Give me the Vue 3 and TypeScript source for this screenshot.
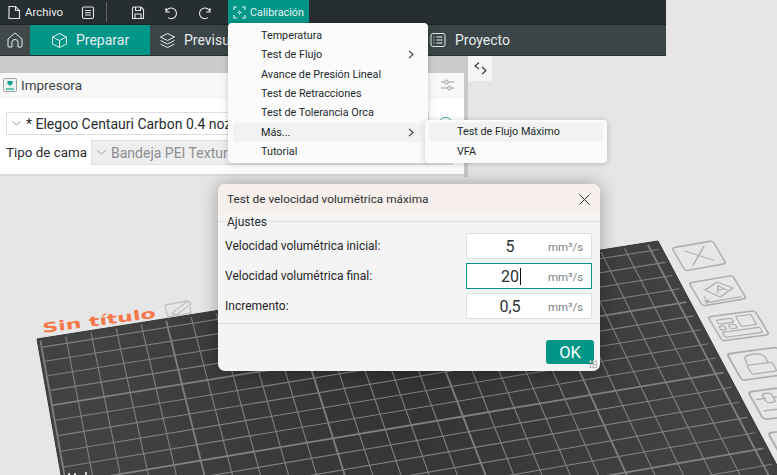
<script setup lang="ts">
// Slicer window with the calibration menu open and the speed test dialog on top.
// The build plate is projected from four corners so the grid lines converge.
type Pt = [number, number];

const menuItems = [
  { label: "Temperatura" },
  { label: "Test de Flujo", arrow: true },
  { label: "Avance de Presión Lineal" },
  { label: "Test de Retracciones" },
  { label: "Test de Tolerancia Orca" },
  { label: "Más...", arrow: true, active: true },
  { label: "Tutorial" },
];

const fields = [
  { label: "Velocidad volumétrica inicial:", value: "5", focus: false },
  { label: "Velocidad volumétrica final:", value: "20", focus: true },
  { label: "Incremento:", value: "0,5", focus: false },
];

function projector(p00: Pt, p10: Pt, p11: Pt, p01: Pt) {
  const dx1 = p10[0] - p11[0];
  const dx2 = p01[0] - p11[0];
  const sx = p00[0] - p10[0] + p11[0] - p01[0];
  const dy1 = p10[1] - p11[1];
  const dy2 = p01[1] - p11[1];
  const sy = p00[1] - p10[1] + p11[1] - p01[1];
  const det = dx1 * dy2 - dx2 * dy1;
  const g = (sx * dy2 - dx2 * sy) / det;
  const h = (dx1 * sy - sx * dy1) / det;
  const a = p10[0] - p00[0] + g * p10[0];
  const b = p01[0] - p00[0] + h * p01[0];
  const d = p10[1] - p00[1] + g * p10[1];
  const e = p01[1] - p00[1] + h * p01[1];
  return (u: number, v: number): Pt => {
    const w = g * u + h * v + 1;
    return [(a * u + b * v + p00[0]) / w, (d * u + e * v + p00[1]) / w];
  };
}

const plate: [Pt, Pt, Pt, Pt] = [[37, 339], [658, 241], [868, 637], [115, 780]];
const project = projector(...plate);
const platePoints = plate.map((p) => p.join(",")).join(" ");

const SIZE = 25.6;
const gridLines: { x1: number; y1: number; x2: number; y2: number; major: boolean }[] = [];
for (let k = 0; k <= 25; k++) {
  const u = (k + 0.12) / SIZE;
  const a = project(u, 0.006);
  const b = project(u, 1);
  gridLines.push({ x1: a[0], y1: a[1], x2: b[0], y2: b[1], major: k % 5 === 0 });
  const v = (k + 0.62) / SIZE;
  const c = project(0.006, v);
  const d = project(0.994, v);
  gridLines.push({ x1: c[0], y1: c[1], x2: d[0], y2: d[1], major: k % 5 === 4 });
}
</script>

<template>
  <div class="app">
    <svg class="scene" width="777" height="475" viewBox="0 0 777 475">
      <defs>
        <radialGradient id="plateShade" gradientUnits="userSpaceOnUse" cx="400" cy="370" r="300">
          <stop offset="0" stop-color="#303331" />
          <stop offset="1" stop-color="#414342" />
        </radialGradient>
      </defs>
      <polygon :points="platePoints" fill="url(#plateShade)" stroke="#363837" stroke-width="1" />
      <line
        v-for="(l, i) in gridLines"
        :key="i"
        :x1="l.x1"
        :y1="l.y1"
        :x2="l.x2"
        :y2="l.y2"
        stroke="#7f817f"
        :stroke-width="l.major ? 1.8 : 1.1"
      />
      <text class="plate-name" transform="matrix(1.62,-0.22,0.12,1,43,333)">Sin título</text>
      <g fill="none" stroke="#c2c2c2" stroke-width="1.4" stroke-linejoin="round">
        <path d="M165 305 L187 301 M165 305 L168 317 L191 313 L190 307" />
        <path d="M172 313 L188 301 L191 304 L176 315 Z" />
      </g>

      <g fill="none" stroke="#aeaeae" stroke-width="1.5" stroke-linejoin="round" stroke-linecap="round">
        <g transform="matrix(1.02,-0.18,0.55,0.95,672,248)">
          <rect width="40" height="24" rx="2.5" />
          <path d="M10 5 L31 19 M29 4 L10 20" stroke-width="1.1" />
        </g>
        <g transform="matrix(1.09,-0.19,0.57,0.96,689,283)">
          <rect width="40" height="24" rx="2.5" />
          <path d="M4 21.5 H36 M6 15 V21 M4 19 L6 21 L8 19" stroke-width="1.1" />
          <path d="M10 9.2 L24 3.7 L34 12 L19 18.3 Z" stroke-width="1.1" />
          <path d="M19 14 L23 7 L28 13 M21 11.5 H26" stroke-width="1" />
        </g>
        <g transform="matrix(1.17,-0.16,0.6,1,708,317)">
          <rect width="40" height="24" rx="2.5" />
          <rect x="5" y="4" width="13" height="4" rx="1.5" stroke-width="1.1" />
          <rect x="22" y="3" width="13" height="10" rx="1" stroke-width="1.1" />
          <rect x="4" y="10" width="5" height="4" rx="2" stroke-width="1.1" />
          <rect x="12" y="10" width="6" height="4" rx="2" stroke-width="1.1" />
          <rect x="4" y="16" width="32" height="5" rx="1" stroke-width="1.1" />
        </g>
        <g transform="matrix(1.25,-0.17,0.62,1.1,727,354)">
          <rect width="40" height="24" rx="2.5" />
          <path d="M11 11 V8 Q11 3 19 3 Q27 3 27 8 V11" stroke-width="1.1" />
          <rect x="10" y="12" width="20" height="8" rx="1.5" stroke-width="1.1" />
        </g>
        <g transform="matrix(1.3,-0.17,0.65,1.15,748,392)">
          <rect width="40" height="24" rx="2.5" />
          <path d="M3 7 H10 M16 7 H30 M4 17 H32" stroke-width="1.1" />
          <rect x="9" y="3" width="7" height="8" rx="2.5" stroke-width="1.1" />
        </g>
        <g transform="matrix(1.35,-0.17,0.68,1.2,768,433)">
          <rect width="40" height="24" rx="2.5" />
        </g>
      </g>
      <g fill="#cfcfcf">
        <rect x="68" y="473" width="2" height="2" />
        <rect x="74" y="473" width="2" height="2" />
        <rect x="85" y="472" width="2" height="3" />
      </g>
    </svg>

    <header class="header">
      <div class="topbar">
        <svg class="ic ic-file" width="14" height="15" viewBox="0 0 14 15">
          <path d="M2 1.5 H8.5 L12.5 5.5 V13.5 H2 Z M8.5 1.5 V5.5 H12.5" />
        </svg>
        <span class="top-label">Archivo</span>
        <svg class="ic ic-list" width="14" height="15" viewBox="0 0 14 15">
          <rect x="1.5" y="2" width="11" height="11.5" rx="1.5" />
          <path d="M4 5.5 H10 M4 7.7 H10 M4 10 H10" />
        </svg>
        <span class="divider"></span>
        <svg class="ic ic-save" width="14" height="15" viewBox="0 0 14 15">
          <path d="M2.5 2 H10 L12.5 4.5 V13.5 H1.5 V3 Q1.5 2 2.5 2 Z" />
          <path d="M4.5 2 V5.5 H9.5 V2 M4 13.5 V9 H10 V13.5" />
        </svg>
        <svg class="ic ic-undo" width="14" height="15" viewBox="0 0 14 15">
          <path d="M3 3 V7 H7 M3 7 A5.3 5.3 0 1 1 5 12.6" />
        </svg>
        <svg class="ic ic-redo" width="14" height="15" viewBox="0 0 14 15">
          <path d="M11 3 V7 H7 M11 7 A5.3 5.3 0 1 0 9 12.6" />
        </svg>
        <div class="calib">
          <svg class="ic-calib" width="13" height="13" viewBox="0 0 13 13">
            <path d="M1 4 V1 H4 M9 1 H12 V4 M12 9 V12 H9 M4 12 H1 V9 M6.5 4.5 V6 M6.5 7 V8.5 M4.5 6.5 H6 M7 6.5 H8.5" />
          </svg>
          <span>Calibración</span>
        </div>
      </div>
      <nav class="tabbar">
        <div class="tab-home">
          <svg width="18" height="18" viewBox="0 0 18 18">
            <path d="M2 8 L9 2 L16 8 V15 Q16 16 15 16 H12 V11 Q12 8.5 9 8.5 Q6 8.5 6 11 V16 H3 Q2 16 2 15 Z" />
          </svg>
        </div>
        <div class="tab tab-active">
          <svg width="17" height="17" viewBox="0 0 17 17">
            <path d="M8.5 1.5 L15.5 5 V12 L8.5 15.5 L1.5 12 V5 Z M1.5 5 L8.5 8.5 L15.5 5 M8.5 8.5 V15.5" />
          </svg>
          <span>Preparar</span>
        </div>
        <div class="tab tab-preview">
          <svg width="17" height="17" viewBox="0 0 17 17">
            <path d="M8.5 1.5 L15.5 5 L8.5 8.5 L1.5 5 Z M1.5 8.5 L8.5 12 L15.5 8.5 M1.5 12 L8.5 15.5 L15.5 12" />
          </svg>
          <span>Previsu</span>
        </div>
        <div class="tab tab-project">
          <svg width="16" height="16" viewBox="0 0 16 16">
            <rect x="1" y="1.5" width="14" height="13" rx="2" />
            <path d="M3.5 5 H4.5 M6.5 5 H12.5 M3.5 8 H4.5 M6.5 8 H12.5 M3.5 11 H4.5 M6.5 11 H12.5" />
          </svg>
          <span>Proyecto</span>
        </div>
      </nav>
    </header>

    <div class="below">
      <aside class="sidebar">
        <div class="side-strip"></div>
        <div class="side-head">
          <svg width="14" height="14" viewBox="0 0 14 14">
            <rect x=".5" y=".5" width="13" height="13" rx="1" fill="#eef3f2" stroke="#9aa3a3" />
            <path d="M4.5 3 H9.5 V5.5 L7 8 L4.5 5.5 Z" fill="#00a08c" />
            <path d="M3 11 H11" stroke="#00a08c" stroke-width="1.2" />
          </svg>
          <span class="side-title">Impresora</span>
          <svg class="tune" width="14" height="14" viewBox="0 0 14 14">
            <path d="M0 4 H4 M7 4 H13 M0 10 H7 M10 10 H13" />
            <rect x="4" y="2" width="3" height="4" rx="1.5" />
            <rect x="7" y="8" width="3" height="4" rx="1.5" />
          </svg>
        </div>
        <div class="side-panel">
          <div class="row-one">
            <div class="combo combo-printer">
              <svg class="chev" width="9" height="5" viewBox="0 0 9 5"><path d="M.5 .5 L4.5 4 L8.5 .5" /></svg>
              <span>* Elegoo Centauri Carbon 0.4 nozzle</span>
            </div>
            <span class="ring"></span>
          </div>
          <div class="row-two">
            <span class="bed-label">Tipo de cama</span>
            <div class="combo combo-bed">
              <svg class="chev" width="9" height="5" viewBox="0 0 9 5"><path d="M.5 .5 L4.5 4 L8.5 .5" /></svg>
              <span>Bandeja PEI Texturizada</span>
            </div>
          </div>
        </div>
      </aside>
      <div class="side-edge"></div>
      <div class="collapse">
        <svg width="15" height="15" viewBox="0 0 15 15">
          <path d="M6 1.5 L2 5 L6 8 M9 6 L13 9.5 L9 13" />
        </svg>
      </div>
    </div>

    <div class="menu">
      <div v-for="item in menuItems" :key="item.label" class="menu-row" :class="{ active: item.active }">
        <span>{{ item.label }}</span>
        <svg v-if="item.arrow" class="menu-arrow" width="6" height="9" viewBox="0 0 6 9"><path d="M1 .8 L5 4.5 L1 8.2" /></svg>
      </div>
    </div>
    <div class="submenu">
      <div class="sub-row active">Test de Flujo Máximo</div>
      <div class="sub-row">VFA</div>
    </div>

    <section class="dialog">
      <div class="dialog-title">
        <span>Test de velocidad volumétrica máxima</span>
        <svg width="11" height="11" viewBox="0 0 11 11"><path d="M.5 .5 L10.5 10.5 M10.5 .5 L.5 10.5" /></svg>
      </div>
      <div class="group">
        <span class="group-label">Ajustes</span>
        <div v-for="f in fields" :key="f.label" class="field">
          <label>{{ f.label }}</label>
          <div class="input" :class="{ focused: f.focus }">
            <span class="value">{{ f.value }}<i v-if="f.focus" class="caret"></i></span>
            <span class="unit">mm³/s</span>
          </div>
        </div>
      </div>
      <div class="dialog-foot">
        <button class="ok" type="button">OK</button>
      </div>
      <span class="grip"></span>
    </section>
  </div>
</template>

<style scoped>
.app {
  position: relative;
  width: 777px;
  height: 475px;
  overflow: hidden;
  background: #e6e6e6;
  font-family: Roboto, "Noto Sans", sans-serif;
  color: #262e30;
}
.scene { position: absolute; left: 0; top: 0; }
.plate-name {
  font-family: "DejaVu Sans", sans-serif;
  font-weight: 700;
  font-size: 13.5px;
  fill: #f5774a;
}

.header { position: relative; width: 666px; }
.topbar {
  display: flex;
  align-items: center;
  height: 24px;
  padding-left: 7px;
  background: #272e2f;
  border-bottom: 1px solid #1e2425;
}
.ic { fill: none; stroke: #e4e7e7; stroke-width: 1.1; flex: none; }
.top-label { margin-left: 4px; font-size: 11.4px; color: #e8ecec; width: 39px; }
.ic-list { margin-left: 17px; }
.divider { width: 1px; height: 20px; margin-left: 11px; background: #5c6263; }
.ic-save { margin-left: 24px; }
.ic-undo { margin-left: 18px; }
.ic-redo { margin-left: 22px; }
.calib {
  display: flex;
  align-items: center;
  gap: 4px;
  height: 24px;
  width: 81px;
  margin-left: 15px;
  padding-left: 5px;
  box-sizing: border-box;
  background: #009688;
  font-size: 10.8px;
  color: #e6f5f3;
}
.ic-calib { fill: none; stroke: #e6f5f3; stroke-width: 1.1; }

.tabbar {
  display: flex;
  height: 30px;
  background: #3b4446;
  border-bottom: 1px solid #2a3031;
  font-size: 14px;
  color: #e4ecec;
}
.tabbar svg { fill: none; stroke: #e4ecec; stroke-width: 1; flex: none; }
.tab-home {
  display: flex;
  align-items: center;
  justify-content: center;
  width: 30px;
  background: #42494b;
}
.tab { display: flex; align-items: center; }
.tab-active { width: 120px; padding-left: 21px; gap: 8px; box-sizing: border-box; background: #009688; }
.tab-preview { width: 280px; padding-left: 9px; gap: 8px; box-sizing: border-box; }
.tab-project { gap: 9px; }

.below { display: flex; align-items: flex-start; width: 492px; }
.sidebar { width: 464px; }
.side-strip { height: 17px; background: #cbcbcb; }
.side-head {
  display: flex;
  align-items: center;
  height: 26px;
  padding: 0 0 2px 3px;
  box-sizing: border-box;
  background: #f8f8f8;
}
.side-title { margin-left: 4px; font-size: 13.5px; color: #3a4244; }
.tune { margin-left: auto; margin-right: 9px; fill: none; stroke: #8c9090; stroke-width: .9; }
.side-panel {
  display: flex;
  flex-direction: column;
  gap: 5px;
  height: 77px;
  padding: 13px 11px 0 6px;
  box-sizing: border-box;
  background: #fff;
  border-bottom: 2px solid #dcdcdc;
}
.row-one, .row-two { display: flex; align-items: center; }
.combo {
  display: flex;
  align-items: center;
  gap: 5px;
  box-sizing: border-box;
  border: 1px solid #dedede;
  padding-left: 5px;
  font-size: 14px;
  white-space: nowrap;
  overflow: hidden;
}
.chev { flex: none; fill: none; stroke: #9a9e9e; }
.combo-printer { width: 423px; height: 23px; }
.ring {
  width: 15px;
  height: 15px;
  margin-left: 9px;
  margin-top: 2px;
  border: 1.5px solid #2fa899;
  border-radius: 50%;
  box-sizing: border-box;
}
.bed-label { width: 85px; font-size: 13.4px; white-space: nowrap; }
.combo-bed { width: 362px; height: 25px; background: #eeeeee; color: #8b8f90; }
.side-edge { width: 4px; height: 121px; background: #c9c9c9; }
.collapse {
  display: flex;
  justify-content: center;
  align-items: center;
  width: 24px;
  height: 25px;
  background: #f5f5f5;
}
.collapse svg { fill: none; stroke: #33393a; stroke-width: 1.1; }

.menu {
  position: absolute;
  left: 228px;
  top: 23px;
  width: 200px;
  height: 140px;
  padding: 2.5px 5px;
  box-sizing: border-box;
  background: #fbfbfb;
  border-radius: 4px;
  box-shadow: 0 1px 6px rgba(0, 0, 0, 0.22);
}
.menu-row {
  display: flex;
  align-items: center;
  justify-content: space-between;
  height: 19.45px;
  padding: 0 9px 0 28px;
  border-radius: 3px;
  font-size: 10.8px;
  color: #22292b;
}
.menu-row.active, .sub-row.active { background: #f2f2f2; }
.menu-arrow { fill: none; stroke: #3a4142; stroke-width: 1.1; }
.submenu {
  position: absolute;
  left: 425px;
  top: 120px;
  width: 182px;
  height: 43px;
  padding: 2px 4px;
  box-sizing: border-box;
  background: #fbfbfb;
  border-radius: 4px;
  box-shadow: 0 1px 6px rgba(0, 0, 0, 0.22);
}
.sub-row {
  display: flex;
  align-items: center;
  height: 19.5px;
  padding-left: 28px;
  border-radius: 3px;
  font-size: 10.8px;
  color: #22292b;
}

.dialog {
  position: absolute;
  left: 218px;
  top: 184px;
  width: 382px;
  height: 187px;
  display: flex;
  flex-direction: column;
  background: #f4f4f4;
  border-radius: 7px;
  overflow: hidden;
  box-shadow: 0 0 18px rgba(0, 0, 0, 0.32);
}
.dialog-title {
  display: flex;
  align-items: center;
  justify-content: space-between;
  flex: none;
  height: 30px;
  padding: 0 10px 0 9px;
  background: #f7efec;
  font-size: 11.8px;
  color: #2b3133;
}
.dialog-title svg { fill: none; stroke: #2b3133; stroke-width: 1; }
.group {
  position: relative;
  display: flex;
  flex-direction: column;
  gap: 4px;
  margin-top: 7px;
  height: 103px;
  padding-top: 11px;
  box-sizing: border-box;
  border-top: 1px solid #dddddd;
  border-bottom: 1px solid #dddddd;
}
.group-label {
  position: absolute;
  left: 9px;
  top: -7px;
  padding-right: 2px;
  background: #f4f4f4;
  font-size: 12px;
  line-height: 14px;
}
.field {
  display: flex;
  align-items: center;
  justify-content: space-between;
  height: 26px;
  padding: 0 8px 0 7px;
}
.field label { font-size: 12px; color: #1f2427; }
.input {
  position: relative;
  display: flex;
  align-items: center;
  width: 126px;
  height: 26px;
  box-sizing: border-box;
  background: #fff;
  border: 1px solid #dedede;
}
.input.focused { border-color: #009688; }
.value {
  position: relative;
  width: 86px;
  text-align: center;
  font-size: 16px;
  color: #2c3234;
}
.caret {
  position: absolute;
  top: 1px;
  margin-left: 1px;
  width: 1px;
  height: 17px;
  background: #111;
}
.unit { margin-left: -5px; margin-top: 2px; font-size: 11.5px; color: #7c8284; }
.dialog-foot { display: flex; justify-content: flex-end; padding: 16px 6px 0 0; }
.ok {
  width: 48px;
  height: 24px;
  padding: 0;
  border: none;
  border-radius: 3px;
  background: #009688;
  color: #fff;
  font-family: inherit;
  font-size: 16.5px;
}
.grip {
  position: absolute;
  right: 3px;
  bottom: 3px;
  width: 8px;
  height: 8px;
  background: radial-gradient(circle, #bdbdbd 1px, transparent 1.1px) 0 0 / 3px 3px;
}
</style>
